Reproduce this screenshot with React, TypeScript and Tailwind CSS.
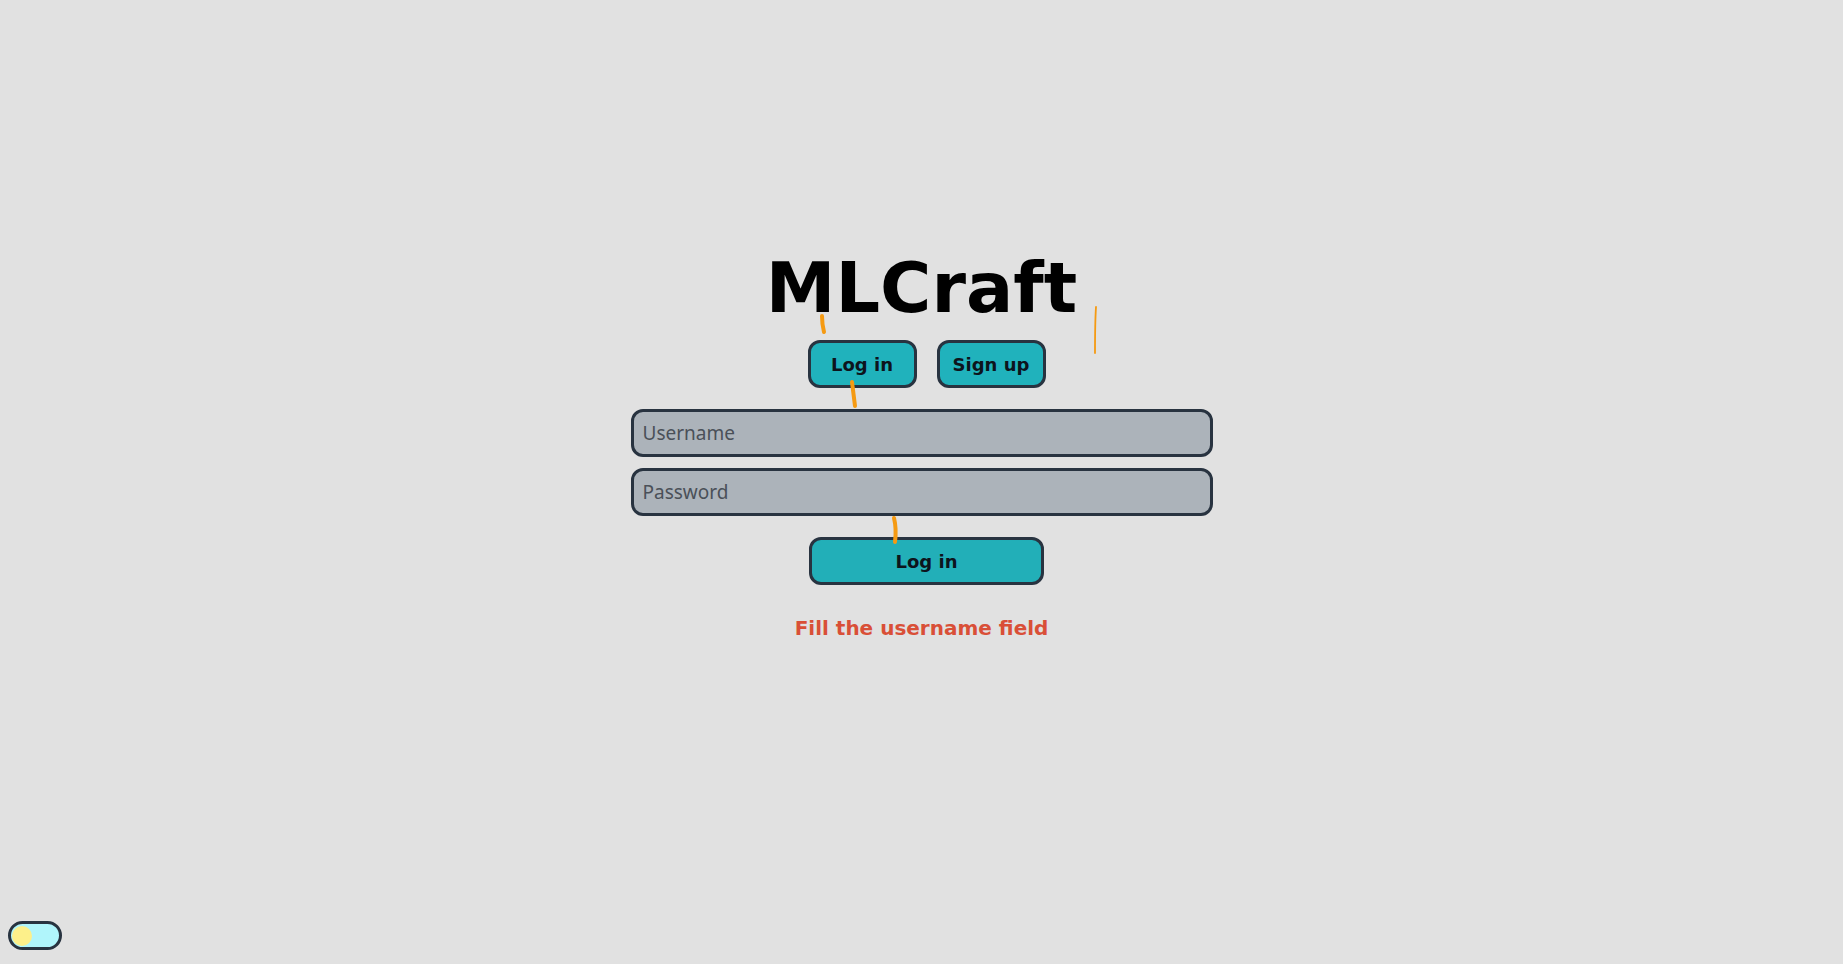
import { useState } from 'react';

const font = { fontFamily: '"DejaVu Sans", "Noto Sans", sans-serif' };

function Marks() {
  // stray orange strokes that sit over the form
  return (
    <svg className="pointer-events-none absolute inset-0" width="1843" height="964">
      <g stroke="#f59a12" strokeLinecap="round" fill="none">
        <path d="M822 316 C822 322 823 328 824 332" strokeWidth="4" />
        <path d="M852 382 C853 390 854 398 855 406" strokeWidth="4" />
        <path d="M894 518 C896 526 896 534 895 542" strokeWidth="4" />
        <path d="M1096 307 C1095 322 1095 338 1095 353" strokeWidth="1.8" />
      </g>
    </svg>
  );
}

export default function App() {
  const [mode, setMode] = useState<'login' | 'signup'>('login');

  return (
    <div className="relative h-[964px] w-full overflow-hidden bg-[#e1e1e1]" style={font}>
      <div className="flex flex-col items-center pt-[253px]">
        <h1 className="text-[70px] font-bold leading-none text-black">MLCraft</h1>

        <div className="ml-[10px] mt-[17px] flex gap-[20px]">
          <button
            onClick={() => setMode('login')}
            className="h-[48px] w-[109px] rounded-[12px] border-[3px] border-[#283340] bg-[#20b2bc] text-[18px] font-bold text-[#0d141c]"
          >
            Log in
          </button>
          <button
            onClick={() => setMode('signup')}
            className="h-[48px] w-[109px] rounded-[12px] border-[3px] border-[#283340] bg-[#20b2bc] text-[18px] font-bold text-[#0d141c]"
          >
            Sign up
          </button>
        </div>

        <div className="mt-[21px] flex w-[582px] flex-col gap-[11px]">
          <input
            placeholder="Username"
            className="h-[48px] w-full rounded-[12px] border-[3px] border-[#283340] bg-[#acb3ba] px-[9px] text-[19px] text-[#1f2630] outline-none placeholder:text-[#4a5058]"
            style={{ fontFamily: '"Noto Sans", "Open Sans", sans-serif' }}
          />
          <input
            type="password"
            placeholder="Password"
            className="h-[48px] w-full rounded-[12px] border-[3px] border-[#283340] bg-[#acb3ba] px-[9px] text-[19px] text-[#1f2630] outline-none placeholder:text-[#4a5058]"
            style={{ fontFamily: '"Noto Sans", "Open Sans", sans-serif' }}
          />
        </div>

        <button className="ml-[10px] mt-[21px] h-[48px] w-[235px] rounded-[12px] border-[3px] border-[#283340] bg-[#22afb8] text-[18px] font-bold text-[#0d141c]">
          {mode === 'login' ? 'Log in' : 'Sign up'}
        </button>

        <p className="mt-[31px] text-[20px] font-bold leading-[24px] text-[#d94f37]">Fill the username field</p>
      </div>

      <div className="absolute bottom-[14px] left-[8px] flex h-[29px] w-[54px] items-center rounded-full border-[3px] border-[#283340] bg-[#b0f5fb] pl-[1px]">
        <div className="h-[20px] w-[20px] rounded-full bg-[#fdf08a]" />
      </div>

      <Marks />
    </div>
  );
}
